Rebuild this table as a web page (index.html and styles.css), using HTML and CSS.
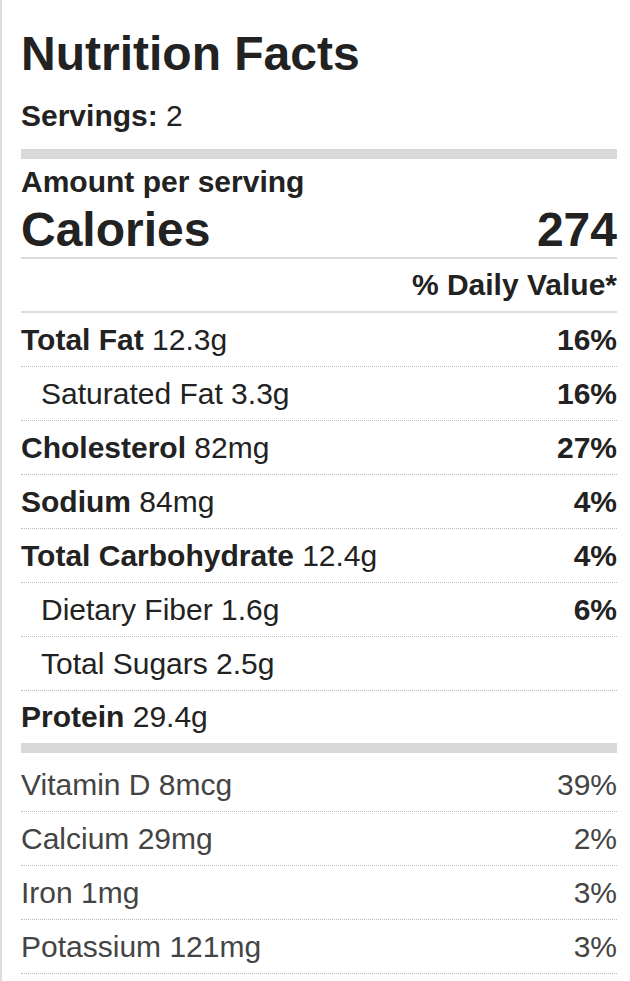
FILE: index.html
```html
<!DOCTYPE html>
<html lang="en">
<head>
    <meta charset="UTF-8">
    <meta name="viewport" content="width=device-width, initial-scale=1.0">
    <title>Nutrition Facts</title>
    <link rel="stylesheet" href="styles.css">
</head>
<body>

<div class="nutrition-label">
    <!-- Header -->
    <div class="nutrition-title">Nutrition Facts</div>
    <div class="nutrition-servings"><strong>Servings:</strong> 2</div>
    <div class="nutrition-bar"></div>

    <!-- Calories -->
    <div class="nutrition-amount">Amount per serving</div>
    <div class="nutrition-calories">
        <span>Calories</span>
        <span>274</span>
    </div>
    <div class="nutrition-daily">% Daily Value*</div>

    <!-- Main nutrients -->
    <div class="nutrient-row">
        <span><strong>Total Fat</strong> 12.3g</span>
        <strong>16%</strong>
    </div>
    <div class="nutrient-row sub">
        <span>Saturated Fat 3.3g</span>
        <strong>16%</strong>
    </div>
    <div class="nutrient-row">
        <span><strong>Cholesterol</strong> 82mg</span>
        <strong>27%</strong>
    </div>
    <div class="nutrient-row">
        <span><strong>Sodium</strong> 84mg</span>
        <strong>4%</strong>
    </div>
    <div class="nutrient-row">
        <span><strong>Total Carbohydrate</strong> 12.4g</span>
        <strong>4%</strong>
    </div>
    <div class="nutrient-row sub">
        <span>Dietary Fiber 1.6g</span>
        <strong>6%</strong>
    </div>
    <div class="nutrient-row sub">
        <span>Total Sugars 2.5g</span>
    </div>
    <div class="nutrient-row last">
        <span><strong>Protein</strong> 29.4g</span>
    </div>
    <div class="nutrition-bar"></div>

    <!-- Vitamins and minerals -->
    <div class="vitamins">
        <div class="nutrient-row">
            <span>Vitamin D 8mcg</span>
            <span>39%</span>
        </div>
        <div class="nutrient-row">
            <span>Calcium 29mg</span>
            <span>2%</span>
        </div>
        <div class="nutrient-row">
            <span>Iron 1mg</span>
            <span>3%</span>
        </div>
        <div class="nutrient-row">
            <span>Potassium 121mg</span>
            <span>3%</span>
        </div>
    </div>
</div>

</body>
</html>
```

FILE: styles.css
```css
/* Page */
body {
    margin: 0;
    background-color: #fff;
}

/* Label container */
.nutrition-label {
    min-height: 100vh;
    box-sizing: border-box;
    border-left: 2px solid #ddd;
    padding: 0 13px 0 19px;
    font-family: "Liberation Sans", Arial, sans-serif;
    font-size: 30px;
    color: #222;
}

.nutrition-label strong {
    font-weight: bold;
}

/* Header */
.nutrition-title {
    padding-top: 20px;
    font-size: 48px;
    font-weight: bold;
    line-height: 68px;
}

.nutrition-servings {
    line-height: 56px;
}

.nutrition-bar {
    height: 10px;
    margin-top: 5px;
    background-color: #d9d9d9;
}

.nutrient-row.last + .nutrition-bar {
    margin-top: 0;
}

/* Calories */
.nutrition-amount {
    font-weight: bold;
    line-height: 45px;
}

.nutrition-calories {
    display: flex;
    justify-content: space-between;
    font-size: 48px;
    font-weight: bold;
    line-height: 51px;
    padding-bottom: 2px;
    border-bottom: 2px solid #ddd;
}

.nutrition-daily {
    text-align: right;
    font-weight: bold;
    line-height: 52px;
    border-bottom: 2px solid #ddd;
}

/* Nutrient rows */
.nutrient-row {
    display: flex;
    justify-content: space-between;
    line-height: 53px;
    border-bottom: 1px dotted #bbb;
}

.nutrient-row.sub {
    padding-left: 20px;
}

.nutrient-row.last {
    line-height: 52px;
    border-bottom: none;
}

/* Vitamins */
.vitamins {
    padding-top: 5px;
    color: #444;
}
```
